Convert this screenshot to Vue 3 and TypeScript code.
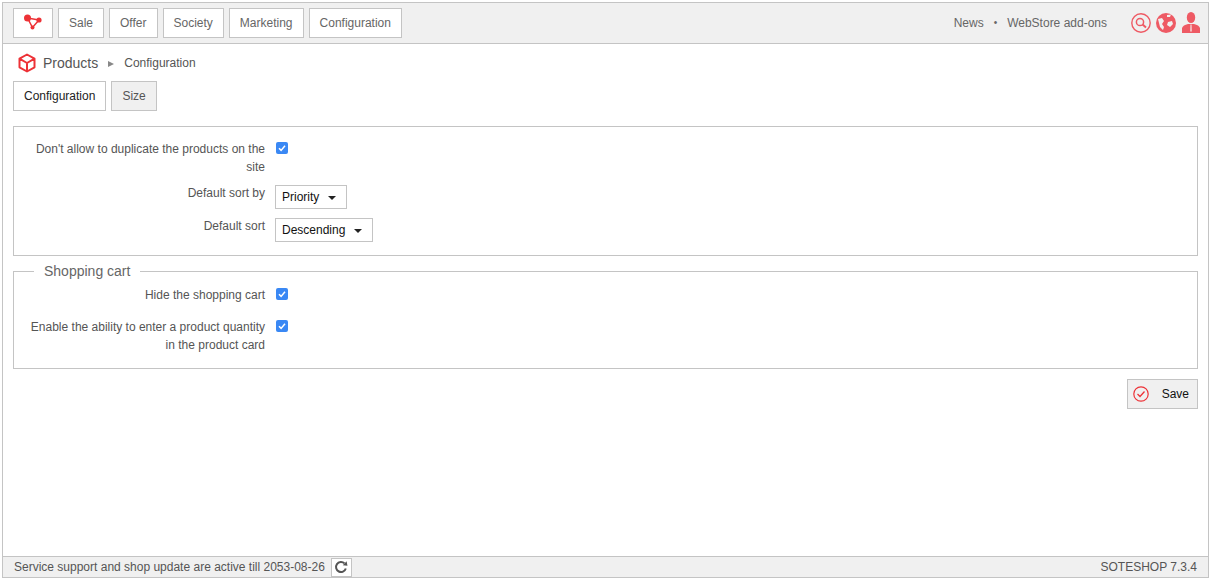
<script setup lang="ts">
const menu = ['Sale', 'Offer', 'Society', 'Marketing', 'Configuration']
</script>

<template>
  <div class="frame">
    <header class="topbar">
      <nav class="menu">
        <a class="menu-btn logo">
          <svg width="20" height="16" viewBox="0 0 20 16">
            <path d="M3.5 4 L15 6 L8.500 13.500 Z" fill="none" stroke="#ed3237" stroke-width="1.500" />
            <circle cx="3.500" cy="4" r="3.500" fill="#ed3237" />
            <circle cx="15" cy="6" r="2.600" fill="#ed3237" />
            <circle cx="8.500" cy="13.500" r="2" fill="#ed3237" />
          </svg>
        </a>
        <a v-for="item in menu" :key="item" class="menu-btn">{{ item }}</a>
      </nav>
      <div class="top-right">
        <a>News</a>
        <span class="dot">•</span>
        <a>WebStore add-ons</a>
        <div class="top-icons">
          <svg width="20" height="20" viewBox="0 0 20 20">
            <circle cx="10" cy="10" r="9.200" fill="none" stroke="#ee5a64" stroke-width="1.400" />
            <circle cx="9" cy="9" r="3.600" fill="none" stroke="#ee5a64" stroke-width="1.500" />
            <path d="M11.600 11.600 L15 14.500" stroke="#ee5a64" stroke-width="2" />
          </svg>
          <svg width="20" height="20" viewBox="0 0 20 20">
            <circle cx="10" cy="10" r="10" fill="#ee5a64" />
            <path d="M2 6 L6 5 L8 8 L6 11 L8 14 L7 17 L4 14 L3 10 Z" fill="#f0f0f0" />
            <path d="M11 2 L15 1.500 L14 4 L11 4 Z M12 9 L16 8 L17 11 L14 14 L11 12 Z" fill="#f0f0f0" />
          </svg>
          <svg width="18" height="21" viewBox="0 0 18 21">
            <ellipse cx="9" cy="5.500" rx="4.200" ry="5.500" fill="#ee5a64" />
            <path d="M0 21 L0 16 Q1 13 6 12 L12 12 Q17 13 18 16 L18 21 Z" fill="#ee5a64" />
            <path d="M8.400 12.500 L9.600 12.500 L9.800 19 L9 20 L8.200 19 Z" fill="#f6d5d7" />
          </svg>
        </div>
      </div>
    </header>

    <main class="content">
      <div class="crumbs">
        <svg width="20" height="20" viewBox="0 0 20 20">
          <path d="M10 1.500 L17.500 5.700 L17.500 14.300 L10 18.500 L2.500 14.300 L2.500 5.700 Z M2.500 5.700 L10 10 L17.500 5.700 M10 10 L10 18.500" fill="none" stroke="#ed3237" stroke-width="2" stroke-linejoin="round" />
        </svg>
        <span class="crumb-main">Products</span>
        <span class="crumb-arrow"></span>
        <span class="crumb-sub">Configuration</span>
      </div>

      <div class="tabs">
        <a class="tab">Configuration</a>
        <a class="tab inactive">Size</a>
      </div>

      <fieldset class="box first">
        <div class="row">
          <label>Don't allow to duplicate the products on the site</label>
          <span class="check">
            <svg width="12" height="12" viewBox="0 0 12 12"><path d="M3 6.300 L5.100 8.400 L9 3.800" fill="none" stroke="#fff" stroke-width="1.500" /></svg>
          </span>
        </div>
        <div class="row">
          <label>Default sort by</label>
          <button class="select">Priority<i class="caret"></i></button>
        </div>
        <div class="row">
          <label>Default sort</label>
          <button class="select">Descending<i class="caret"></i></button>
        </div>
      </fieldset>

      <fieldset class="box cart">
        <legend>Shopping cart</legend>
        <div class="row">
          <label>Hide the shopping cart</label>
          <span class="check">
            <svg width="12" height="12" viewBox="0 0 12 12"><path d="M3 6.300 L5.100 8.400 L9 3.800" fill="none" stroke="#fff" stroke-width="1.500" /></svg>
          </span>
        </div>
        <div class="row">
          <label>Enable the ability to enter a product quantity in the product card</label>
          <span class="check">
            <svg width="12" height="12" viewBox="0 0 12 12"><path d="M3 6.300 L5.100 8.400 L9 3.800" fill="none" stroke="#fff" stroke-width="1.500" /></svg>
          </span>
        </div>
      </fieldset>

      <div class="actions">
        <button class="save">
          <svg width="16" height="16" viewBox="0 0 16 16">
            <circle cx="8" cy="8" r="7.200" fill="none" stroke="#ed3237" stroke-width="1.200" />
            <path d="M4.500 8 L7 10.500 L11.500 5.500" fill="none" stroke="#ed3237" stroke-width="1.300" />
          </svg>
          <span>Save</span>
        </button>
      </div>
    </main>

    <footer class="footer">
      <div class="support">
        <span>Service support and shop update are active till 2053-08-26</span>
        <button class="refresh">
          <svg width="14" height="14" viewBox="0 0 14 14">
            <path d="M11.800 8.500 A5 5 0 1 1 10.500 3.400" fill="none" stroke="#555" stroke-width="2" />
            <path d="M8.800 5.200 L13.500 5.800 L12.600 1.200 Z" fill="#555" />
          </svg>
        </button>
      </div>
      <span>SOTESHOP 7.3.4</span>
    </footer>
  </div>
</template>

<style>
html, body {
  margin: 0;
  background: #fff;
}
</style>

<style scoped>
.frame {
  box-sizing: border-box;
  width: 1207px;
  height: 576px;
  margin: 2px 0 0 2px;
  border: 1px solid #c4c4c4;
  display: flex;
  flex-direction: column;
  font: 12px/18px "Liberation Sans", Arial, sans-serif;
  color: #555;
}

.topbar {
  box-sizing: border-box;
  height: 41px;
  flex: none;
  background: #f0f0f0;
  border-bottom: 1px solid #c4c4c4;
  padding: 5px 8px 0 10px;
  display: flex;
  justify-content: space-between;
}

.menu {
  display: flex;
  gap: 5px;
}

.menu-btn {
  box-sizing: border-box;
  height: 30px;
  padding: 0 10px;
  background: #fff;
  border: 1px solid #c4c4c4;
  display: flex;
  align-items: center;
  color: #666;
}

.menu-btn.logo {
  width: 40px;
  padding: 0 0 3px 10px;
}

.top-right {
  display: flex;
  align-items: flex-start;
  color: #666;
  padding-top: 6px;
}

.dot {
  font-size: 10px;
  margin: 0 10px;
}

.top-icons {
  display: flex;
  align-items: flex-start;
  gap: 5px;
  margin: -1px 0 0 24px;
}

.top-icons svg:last-child {
  margin-left: 1px;
  margin-top: -1px;
}

.content {
  flex: 1;
  padding: 0 10px;
}

.crumbs {
  height: 37px;
  padding-left: 4px;
  display: flex;
  align-items: center;
}

.crumb-main {
  margin-left: 6px;
  font-size: 14px;
}

.crumb-arrow {
  width: 0;
  height: 0;
  margin: 2px 10px 0 10px;
  border-left: 6px solid #888;
  border-top: 3.500px solid transparent;
  border-bottom: 3.500px solid transparent;
}

.crumb-sub {
  margin-top: 1px;
}

.tabs {
  display: flex;
  gap: 5px;
}

.tab {
  box-sizing: border-box;
  height: 30px;
  padding: 0 10px;
  background: #fff;
  border: 1px solid #c4c4c4;
  display: flex;
  align-items: center;
  color: #222;
}

.tab.inactive {
  background: #f0f0f0;
  color: #555;
}

.box {
  box-sizing: border-box;
  margin: 0;
  padding: 0;
  min-width: 0;
  border: 1px solid #c4c4c4;
}

.box.first {
  margin-top: 15px;
  padding: 13px 0 14px;
  height: 130px;
}

.box.cart {
  margin-top: 5px;
  padding: 5px 0 14px;
}

.box legend {
  margin-left: 20px;
  padding: 0 10px;
  font-size: 14px;
  line-height: 20px;
  color: #666;
}

.row {
  display: flex;
  align-items: flex-start;
  gap: 10px;
  min-height: 24px;
}

.row + .row {
  margin-top: 8px;
}

.row label {
  box-sizing: border-box;
  width: 251px;
  padding-left: 12px;
  text-align: right;
}

.check {
  box-sizing: border-box;
  width: 12px;
  height: 12px;
  margin: 2px 0 0 1px;
  background: #3a88f4;
  border-radius: 2px;
  display: block;
}

.check svg {
  display: block;
}

.select {
  box-sizing: border-box;
  height: 24px;
  margin-top: 1px;
  padding: 0 6px;
  background: #fff;
  border: 1px solid #c4c4c4;
  font: inherit;
  color: #111;
  display: flex;
  align-items: center;
}

.caret {
  width: 0;
  height: 0;
  margin: 1px 4px 0 9px;
  border-top: 4px solid #222;
  border-left: 4px solid transparent;
  border-right: 4px solid transparent;
}

.actions {
  display: flex;
  justify-content: flex-end;
  margin-top: 10px;
}

.save {
  box-sizing: border-box;
  width: 71px;
  height: 30px;
  padding: 0 8px 0 5px;
  background: #f0f0f0;
  border: 1px solid #c4c4c4;
  font: inherit;
  color: #111;
  display: flex;
  align-items: center;
  justify-content: space-between;
}

.footer {
  box-sizing: border-box;
  height: 21px;
  flex: none;
  background: #f0f0f0;
  border-top: 1px solid #c4c4c4;
  padding: 0 11px;
  display: flex;
  justify-content: space-between;
  align-items: center;
}

.support {
  display: flex;
  align-items: center;
  gap: 6px;
}

.refresh {
  box-sizing: border-box;
  width: 21px;
  height: 19px;
  padding: 0;
  background: #fff;
  border: 1px solid #c4c4c4;
  display: flex;
  align-items: center;
  justify-content: center;
}
</style>
